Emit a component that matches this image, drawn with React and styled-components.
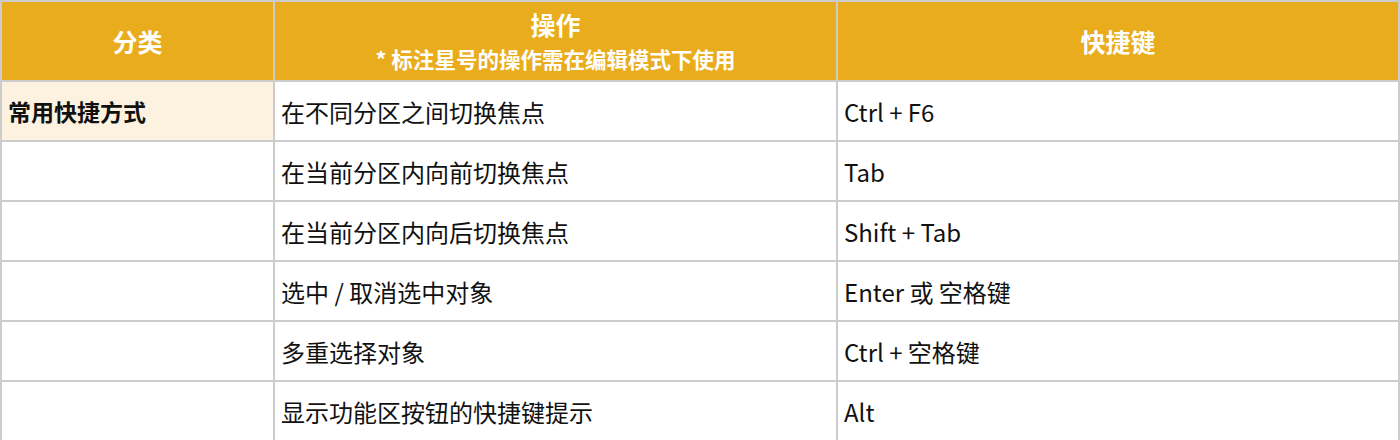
import React from 'react';
import styled, { createGlobalStyle } from 'styled-components';

const GlobalStyle = createGlobalStyle`
  html, body {
    margin: 0;
    padding: 0;
    background: #ffffff;
    overflow: hidden;
  }
  body {
    font-family: "Noto Sans CJK SC", "Noto Sans", sans-serif;
  }
`;

const Table = styled.div`
  display: grid;
  grid-template-columns: 271px 561px 560px;
  grid-auto-rows: 58px;
  grid-template-rows: 78px;
  gap: 2px;
  padding: 2px;
  width: 1400px;
  box-sizing: border-box;
  background: #cccccc;
`;

const HeadCell = styled.div`
  background: #e9ac1c;
  color: #ffffff;
  font-weight: 700;
  display: flex;
  flex-direction: column;
  align-items: center;
  justify-content: center;
`;

const HeadTitle = styled.div`
  font-size: 25px;
  line-height: 36px;
`;

const HeadNote = styled.div`
  font-size: 21.5px;
  line-height: 34px;
`;

const Cell = styled.div`
  background: ${p => (p.$category ? '#fdf2e0' : '#ffffff')};
  color: #111111;
  font-size: ${p => (p.$category ? '23px' : '24px')};
  font-weight: ${p => (p.$category ? 700 : 400)};
  display: flex;
  align-items: center;
  padding: 0 6px;
  white-space: nowrap;
`;

const rows = [
  ['常用快捷方式', '在不同分区之间切换焦点', 'Ctrl + F6'],
  ['', '在当前分区内向前切换焦点', 'Tab'],
  ['', '在当前分区内向后切换焦点', 'Shift + Tab'],
  ['', '选中 / 取消选中对象', 'Enter 或 空格键'],
  ['', '多重选择对象', 'Ctrl + 空格键'],
  ['', '显示功能区按钮的快捷键提示', 'Alt'],
];

export default function App() {
  return (
    <>
      <GlobalStyle />
      <Table>
        <HeadCell>
          <HeadTitle>分类</HeadTitle>
        </HeadCell>
        <HeadCell>
          <HeadTitle>操作</HeadTitle>
          <HeadNote>* 标注星号的操作需在编辑模式下使用</HeadNote>
        </HeadCell>
        <HeadCell>
          <HeadTitle>快捷键</HeadTitle>
        </HeadCell>
        {rows.map((r, i) => (
          <React.Fragment key={i}>
            <Cell $category={!!r[0]}>{r[0]}</Cell>
            <Cell>{r[1]}</Cell>
            <Cell>{r[2]}</Cell>
          </React.Fragment>
        ))}
      </Table>
    </>
  );
}
